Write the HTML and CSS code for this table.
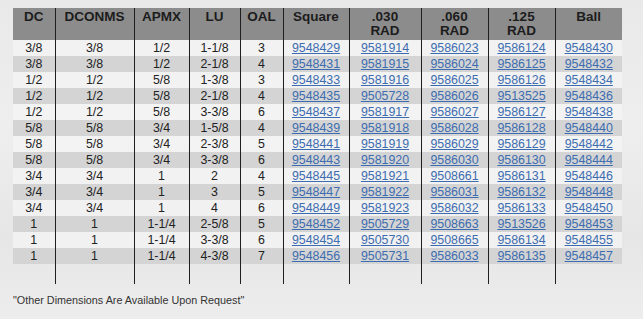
FILE: index.html
```html
<!DOCTYPE html>
<html lang="en">
<head>
  <meta charset="UTF-8">
  <title>Ball and Radius End Mills</title>
  <link rel="stylesheet" href="styles.css">
</head>
<body>
  <table class="sizes">
    <thead>
      <tr>
        <th class="c-dc">DC</th>
        <th class="c-dconms">DCONMS</th>
        <th class="c-apmx">APMX</th>
        <th class="c-lu">LU</th>
        <th class="c-oal">OAL</th>
        <th class="c-sq">Square</th>
        <th class="c-r1">.030<br>RAD</th>
        <th class="c-r2">.060<br>RAD</th>
        <th class="c-r3">.125<br>RAD</th>
        <th class="c-ball">Ball</th>
      </tr>
    </thead>
    <tbody id="rows"></tbody>
  </table>

  <p class="note">"Other Dimensions Are Available Upon Request"</p>

  <script>
    // DC, DCONMS, APMX, LU, OAL, square, .030, .060, .125, ball
    const rows = [
      ['3/8', '3/8', '1/2', '1-1/8', '3', '9548429', '9581914', '9586023', '9586124', '9548430'],
      ['3/8', '3/8', '1/2', '2-1/8', '4', '9548431', '9581915', '9586024', '9586125', '9548432'],
      ['1/2', '1/2', '5/8', '1-3/8', '3', '9548433', '9581916', '9586025', '9586126', '9548434'],
      ['1/2', '1/2', '5/8', '2-1/8', '4', '9548435', '9505728', '9586026', '9513525', '9548436'],
      ['1/2', '1/2', '5/8', '3-3/8', '6', '9548437', '9581917', '9586027', '9586127', '9548438'],
      ['5/8', '5/8', '3/4', '1-5/8', '4', '9548439', '9581918', '9586028', '9586128', '9548440'],
      ['5/8', '5/8', '3/4', '2-3/8', '5', '9548441', '9581919', '9586029', '9586129', '9548442'],
      ['5/8', '5/8', '3/4', '3-3/8', '6', '9548443', '9581920', '9586030', '9586130', '9548444'],
      ['3/4', '3/4', '1', '2', '4', '9548445', '9581921', '9508661', '9586131', '9548446'],
      ['3/4', '3/4', '1', '3', '5', '9548447', '9581922', '9586031', '9586132', '9548448'],
      ['3/4', '3/4', '1', '4', '6', '9548449', '9581923', '9586032', '9586133', '9548450'],
      ['1', '1', '1-1/4', '2-5/8', '5', '9548452', '9505729', '9508663', '9513526', '9548453'],
      ['1', '1', '1-1/4', '3-3/8', '6', '9548454', '9505730', '9508665', '9586134', '9548455'],
      ['1', '1', '1-1/4', '4-3/8', '7', '9548456', '9505731', '9586033', '9586135', '9548457']
    ];

    const body = document.getElementById('rows');

    rows.forEach(r => {
      const tr = document.createElement('tr');
      r.forEach((v, i) => {
        const td = document.createElement('td');
        if (i < 5) {
          td.textContent = v;
        } else {
          const a = document.createElement('a');
          a.href = '#' + v;
          a.textContent = v;
          td.appendChild(a);
        }
        tr.appendChild(td);
      });
      body.appendChild(tr);
    });

    // empty row so the column lines run on past the last item
    const tail = document.createElement('tr');
    tail.className = 'tail';
    for (let i = 0; i < 10; i++) tail.appendChild(document.createElement('td'));
    body.appendChild(tail);
  </script>
</body>
</html>
```

FILE: styles.css
```css
body {
  margin: 0;
  padding: 8px 0 0 13px;
  font-family: "Liberation Sans", Arial, sans-serif;
  color: #1e1e1e;
  background: linear-gradient(180deg, #e9e9e9 0%, #eeeeee 40%, #e6e6e6 75%, #ededed 100%);
  min-height: 311px;
}

.sizes {
  border-collapse: collapse;
  table-layout: fixed;
  width: 609px;
}

.sizes th,
.sizes td {
  padding: 0;
  text-align: center;
  border-left: 1px solid #1f1f1f;
}
.sizes th:first-child,
.sizes td:first-child {
  border-left: 0;
}

.sizes th {
  background-color: #8c8c8c;
  height: 32px;
  vertical-align: top;
  padding-top: 2px;
  box-sizing: border-box;
  font-size: 13.5px;
  line-height: 14px;
  font-weight: bold;
  color: #1c1c1c;
}

.c-dc { width: 42px; }
.c-dconms { width: 79px; }
.c-apmx { width: 55px; }
.c-lu { width: 51px; }
.c-oal { width: 43px; }
.c-sq { width: 66px; }
.c-r1 { width: 72px; }
.c-r2 { width: 67px; }
.c-r3 { width: 67px; }
.c-ball { width: 67px; }

.sizes td {
  height: 16px;
  font-size: 12.4px;
  line-height: 16px;
  color: #222;
}

.sizes tbody tr:nth-child(odd) td {
  background-color: rgba(245, 245, 245, 0.7);
}
.sizes tbody tr:nth-child(even) td {
  background-color: #d4d4d4;
}
.sizes tbody tr.tail td {
  background-color: transparent;
  height: 20px;
}

.sizes a {
  color: #3d6db0;
  text-decoration: underline;
}

.note {
  margin: 10px 0 0 0;
  font-size: 10.8px;
  color: #333;
}
```
